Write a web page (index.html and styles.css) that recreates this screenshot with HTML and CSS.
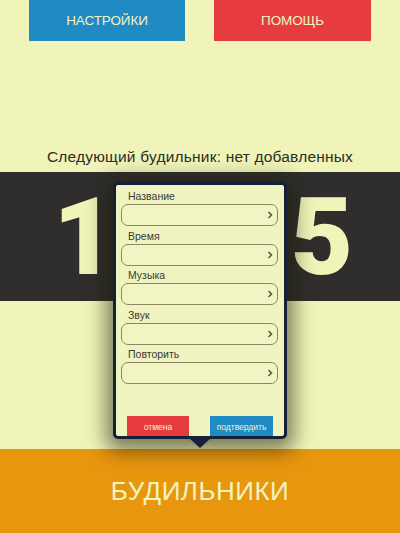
FILE: index.html
```html
<!DOCTYPE html>
<html>
<head>
<meta charset="utf-8">
<link rel="stylesheet" href="styles.css">
</head>
<body>
<div class="page">
  <div class="top">
    <div class="tbtn blue">НАСТРОЙКИ</div>
    <div class="tbtn red">ПОМОЩЬ</div>
  </div>
  <div class="next">Следующий будильник: нет добавленных</div>
  <div class="band">
    <span class="digit one">1</span>
    <span class="digit five">5</span>
  </div>
  <div class="mid"></div>
  <div class="footer">БУДИЛЬНИКИ</div>

  <div class="popup">
    <div class="pinner">
      <div class="group">
        <div class="label">Название</div>
        <div class="field"><svg class="chev" viewBox="0 0 6 8" width="6" height="8"><path d="M1.5 1 L4.5 4 L1.5 7" fill="none" stroke="#5a5646" stroke-width="1.6"/></svg></div>
      </div>
      <div class="group">
        <div class="label">Время</div>
        <div class="field"><svg class="chev" viewBox="0 0 6 8" width="6" height="8"><path d="M1.5 1 L4.5 4 L1.5 7" fill="none" stroke="#5a5646" stroke-width="1.6"/></svg></div>
      </div>
      <div class="group">
        <div class="label">Музыка</div>
        <div class="field"><svg class="chev" viewBox="0 0 6 8" width="6" height="8"><path d="M1.5 1 L4.5 4 L1.5 7" fill="none" stroke="#5a5646" stroke-width="1.6"/></svg></div>
      </div>
      <div class="group">
        <div class="label">Звук</div>
        <div class="field"><svg class="chev" viewBox="0 0 6 8" width="6" height="8"><path d="M1.5 1 L4.5 4 L1.5 7" fill="none" stroke="#5a5646" stroke-width="1.6"/></svg></div>
      </div>
      <div class="group">
        <div class="label">Повторить</div>
        <div class="field"><svg class="chev" viewBox="0 0 6 8" width="6" height="8"><path d="M1.5 1 L4.5 4 L1.5 7" fill="none" stroke="#5a5646" stroke-width="1.6"/></svg></div>
      </div>
      <div class="actions">
        <div class="abtn cancel">отмена</div>
        <div class="abtn confirm">подтвердить</div>
      </div>
    </div>
    <div class="arrow"></div>
  </div>
</div>
</body>
</html>
```
FILE: styles.css
```css
html, body {
  margin: 0;
  padding: 0;
}
body {
  background: #f0f4b9;
  font-family: "Liberation Sans", Arial, sans-serif;
}
.page {
  position: relative;
  width: 400px;
  height: 533px;
  overflow: hidden;
  display: flex;
  flex-direction: column;
}
.top {
  display: flex;
  gap: 29px;
  padding-left: 29px;
  height: 41px;
}
.tbtn {
  width: 156px;
  height: 41px;
  display: flex;
  align-items: center;
  justify-content: center;
  color: #f0f4c0;
  font-size: 13.5px;
  letter-spacing: -0.1px;
}
.blue { background: #1f8ac4; }
.red { background: #e63c40; width: 157px; }
.next {
  height: 131px;
  box-sizing: border-box;
  display: flex;
  align-items: flex-end;
  justify-content: center;
  padding-bottom: 5px;
  font-size: 15.5px;
  line-height: 20px;
  color: #2c2c28;
  letter-spacing: 0.2px;
}
.band {
  height: 129px;
  background: #2f2e2c;
  display: flex;
  justify-content: space-between;
  align-items: center;
  padding: 0 47px 0 53px;
}
.digit {
  font-family: Roboto, "Liberation Sans", sans-serif;
  font-weight: 900;
  font-size: 108px;
  line-height: 108px;
  color: #f0f4b9;
}
.mid {
  height: 148px;
}
.footer {
  flex: 1;
  background: #e9960f;
  display: flex;
  align-items: center;
  justify-content: center;
  color: #f0f4c0;
  font-size: 26px;
  letter-spacing: 0.5px;
}
.popup {
  position: absolute;
  left: 113px;
  top: 182px;
  width: 174px;
  height: 257px;
  box-sizing: border-box;
  border: 3px solid #162039;
  border-radius: 5px;
  background: #f0f4c0;
  box-shadow: 0 5px 20px 7px rgba(25, 25, 5, 0.55);
}
.pinner {
  height: 100%;
  display: flex;
  flex-direction: column;
  padding: 4px 6px 0 5px;
  box-sizing: border-box;
  overflow: hidden;
}
.group {
  margin-bottom: 2.5px;
}
.label {
  font-size: 10.5px;
  line-height: 14px;
  color: #3a3a32;
  padding-left: 7px;
  margin-bottom: 1px;
}
.field {
  height: 22px;
  box-sizing: border-box;
  border: 1px solid #8c8662;
  border-radius: 7px;
  background: #f1f5c3;
  display: flex;
  align-items: center;
  justify-content: flex-end;
  padding-right: 4px;
}
.chev { display: block; }
.actions {
  margin-top: auto;
  display: flex;
  justify-content: space-between;
  padding: 0 5px 0 6px;
}
.abtn {
  width: 62px;
  height: 22px;
  display: flex;
  align-items: center;
  justify-content: center;
  font-size: 8.5px;
  color: #f0f4c0;
  margin-bottom: -2px;
}
.cancel { background: #e63c40; }
.confirm { background: #1f8ac4; width: 63px; }
.arrow {
  position: absolute;
  left: 50%;
  bottom: -12px;
  margin-left: -11px;
  width: 0;
  height: 0;
  border-left: 11px solid transparent;
  border-right: 11px solid transparent;
  border-top: 10px solid #162039;
}
```
